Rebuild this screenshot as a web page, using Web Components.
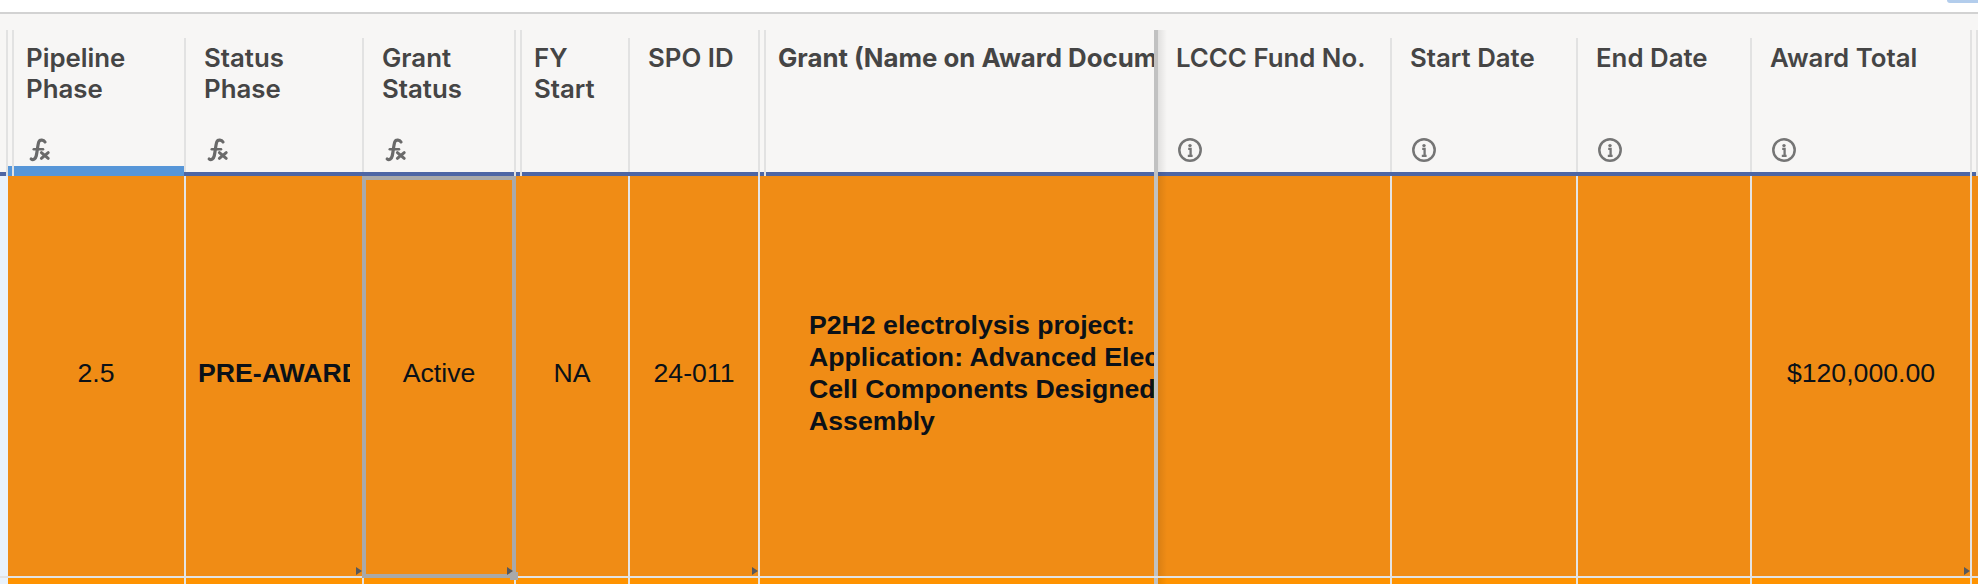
<!DOCTYPE html>
<html><head><meta charset="utf-8"><style>
html,body{margin:0;padding:0;background:#fff;overflow:hidden}
</style></head><body>
<sheet-view>
  <sheet-row slot="head">
    <head-cell tall></head-cell>
    <head-cell start accent icon="fx">Pipeline<br>Phase</head-cell>
    <head-cell icon="fx">Status<br>Phase</head-cell>
    <head-cell tall icon="fx">Grant<br>Status</head-cell>
    <head-cell start>FY<br>Start</head-cell>
    <head-cell tall>SPO ID</head-cell>
    <head-cell start frozen strong><span style="white-space:nowrap">Grant (Name on Award Document)</span></head-cell>
    <head-cell shade icon="info"><span style="white-space:nowrap">LCCC Fund No.</span></head-cell>
    <head-cell icon="info">Start Date</head-cell>
    <head-cell icon="info">End Date</head-cell>
    <head-cell tall icon="info">Award Total</head-cell>
    <head-cell start></head-cell>
  </sheet-row>
  <sheet-row slot="body">
    <data-cell gutter></data-cell>
    <data-cell>2.5</data-cell>
    <data-cell strong flag>PRE-AWARD</data-cell>
    <data-cell selected flag>Active</data-cell>
    <data-cell>NA</data-cell>
    <data-cell flag>24-011</data-cell>
    <data-cell frozen long>P2H2 electrolysis project:<br>Application: Advanced Electrolyzer<br>Cell Components Designed for<br>Assembly</data-cell>
    <data-cell shade></data-cell>
    <data-cell></data-cell>
    <data-cell></data-cell>
    <data-cell flag>$120,000.00</data-cell>
    <data-cell last></data-cell>
  </sheet-row>
  <sheet-row slot="next">
    <data-cell gutter next></data-cell>
    <data-cell next></data-cell><data-cell next></data-cell><data-cell next></data-cell><data-cell next></data-cell><data-cell next></data-cell>
    <data-cell next frozen></data-cell>
    <data-cell next shade></data-cell><data-cell next></data-cell><data-cell next></data-cell><data-cell next></data-cell>
    <data-cell next last></data-cell>
  </sheet-row>
</sheet-view>
<script>
const fx='<svg width="24" height="24" viewBox="0 0 24 24" fill="none"><path d="M17 4C15.6 1.8 12 1.2 10.9 3.6 9.6 6.6 9.4 13.4 8.2 18 7.5 20.8 5.2 22.4 3.2 21" stroke="#6a6a6a" stroke-width="3.2" stroke-linecap="round"/><path d="M5.8 11.2h9.2" stroke="#6a6a6a" stroke-width="2.6" stroke-linecap="round"/><path d="M13.4 14.6l6.8 5.8M20.2 14.6l-6.8 5.8" stroke="#6a6a6a" stroke-width="3" stroke-linecap="round"/></svg>';
const info='<svg width="24" height="24" viewBox="0 0 24 24" fill="none"><circle cx="12" cy="12" r="10.7" stroke="#757575" stroke-width="2.5"/><circle cx="12" cy="7.6" r="1.7" fill="#757575"/><path d="M10.2 10.8H12.6V17.6M9.8 17.8H14.6" stroke="#757575" stroke-width="2.3"/></svg>';
function shell(el,html){el.attachShadow({mode:'open'}).innerHTML=html;}
class SheetView extends HTMLElement{constructor(){super();shell(this,`<style>
:host{display:block;width:1978px;height:584px;overflow:hidden;background:#fff;position:relative;--cols:8px 178px 178px 152px 114px 130px 398px 234px 186px 174px 220px 6px}
.top{height:12px}
.chip{position:absolute;right:0;top:0;width:31px;height:3px;background:#b3cdec;border-bottom-left-radius:6px}
.frame{height:2px;background:#d2d2d2}
.sep{height:2px;background:#e2e2e2;position:relative}
</style>
<div class="top"><span class="chip"></span></div>
<div class="frame"></div>
<slot name="head"></slot>
<slot name="body"></slot>
<div class="sep"></div>
<slot name="next"></slot>`);}}
class SheetRow extends HTMLElement{constructor(){super();shell(this,`<style>
:host{display:grid;grid-template-columns:var(--cols)}
:host([slot=head]){height:162px}
:host([slot=body]){height:400px}
:host([slot=next]){height:6px}
</style><slot></slot>`);}}
class HeadCell extends HTMLElement{constructor(){super();shell(this,`<style>
:host{display:block;position:relative;box-sizing:border-box;min-width:0;background:#f7f6f5;border-bottom:4px solid #4d66a5;color:#454545;font:600 25.8px/31px Inter,sans-serif}
:host([strong]){font-weight:700}
.clip{overflow:hidden;height:100%;box-sizing:border-box;padding:28px 0 0 18px}
:host([frozen]) .clip{margin-right:4px}
.r,.l{position:absolute;width:2px;background:#e2e2e2;display:none}
.r{right:0;top:24px;bottom:0;display:block}
:host([tall]) .r{top:16px;bottom:-4px}
:host([frozen]) .r{top:16px;bottom:-4px;width:4px;background:#c1c1c1}
:host([start]) .l{display:block;left:4px;top:16px;bottom:-4px}
.ac{display:none;position:absolute;left:0;right:2px;bottom:-4px;height:10px;background:#5796d8}
:host([accent]) .ac{display:block}
.sh{display:none;position:absolute;left:0;top:16px;bottom:-4px;width:9px;background:linear-gradient(90deg,rgba(0,0,0,.09),rgba(0,0,0,0))}
:host([shade]) .sh{display:block}
.ic{position:absolute;left:20px;bottom:10px;width:24px;height:24px}
svg{display:block}
</style><span class="ac"></span><div class="clip"><slot></slot></div><span class="ic"></span><span class="sh"></span><span class="l"></span><span class="r"></span>`);
const k=this.getAttribute('icon');if(k)this.shadowRoot.querySelector('.ic').innerHTML=k==='fx'?fx:info;}}
class DataCell extends HTMLElement{constructor(){super();shell(this,`<style>
:host{display:flex;align-items:center;position:relative;box-sizing:border-box;min-width:0;background:#f08c15;border-right:2px solid #e4e4e4;color:#0b1118;font:26.67px/32px "Liberation Sans",Arial,sans-serif;padding:0 12px 6px 12px}
:host([gutter]){background:#e9f2fc;border:0;padding:0}
:host([last]){border:0;padding:0}
:host([next]){background:#ff9300;padding:0}
:host([next][gutter]){background:#e9f2fc}
:host([strong]){font-weight:700}
:host([frozen]){border-right:4px solid #c1c1c1}
:host([long]){font-weight:700;padding:0 0 6px 49px;white-space:nowrap}
:host([selected]){z-index:2}
.in{flex:1;min-width:0;overflow:hidden;text-align:center;white-space:nowrap}
:host([long]) .in{text-align:left}
:host([strong]) .in{text-align:left}
.flag{display:none;position:absolute;right:0;bottom:1px;width:0;height:0;border-left:6px solid #57585c;border-top:4px solid transparent;border-bottom:4px solid transparent;z-index:2}
:host([flag]) .flag{display:block}
:host([selected]) .flag{right:1px}
.sel{display:none;position:absolute;left:-2px;right:-2px;top:0;bottom:-2px;border:4px solid #a9a9a9}
.hd{display:none;position:absolute;right:-4px;bottom:-4px;width:8px;height:8px;background:#a9a9a9}
:host([selected]) .sel,:host([selected]) .hd{display:block}
.sh{display:none;position:absolute;left:0;top:0;bottom:0;width:9px;background:linear-gradient(90deg,rgba(0,0,0,.09),rgba(0,0,0,0))}
:host([shade]) .sh{display:block}
</style><span class="sh"></span><div class="in"><slot></slot></div><span class="sel"></span><span class="hd"></span><span class="flag"></span>`);}}
customElements.define('sheet-view',SheetView);
customElements.define('sheet-row',SheetRow);
customElements.define('head-cell',HeadCell);
customElements.define('data-cell',DataCell);
</script>
</body></html>
